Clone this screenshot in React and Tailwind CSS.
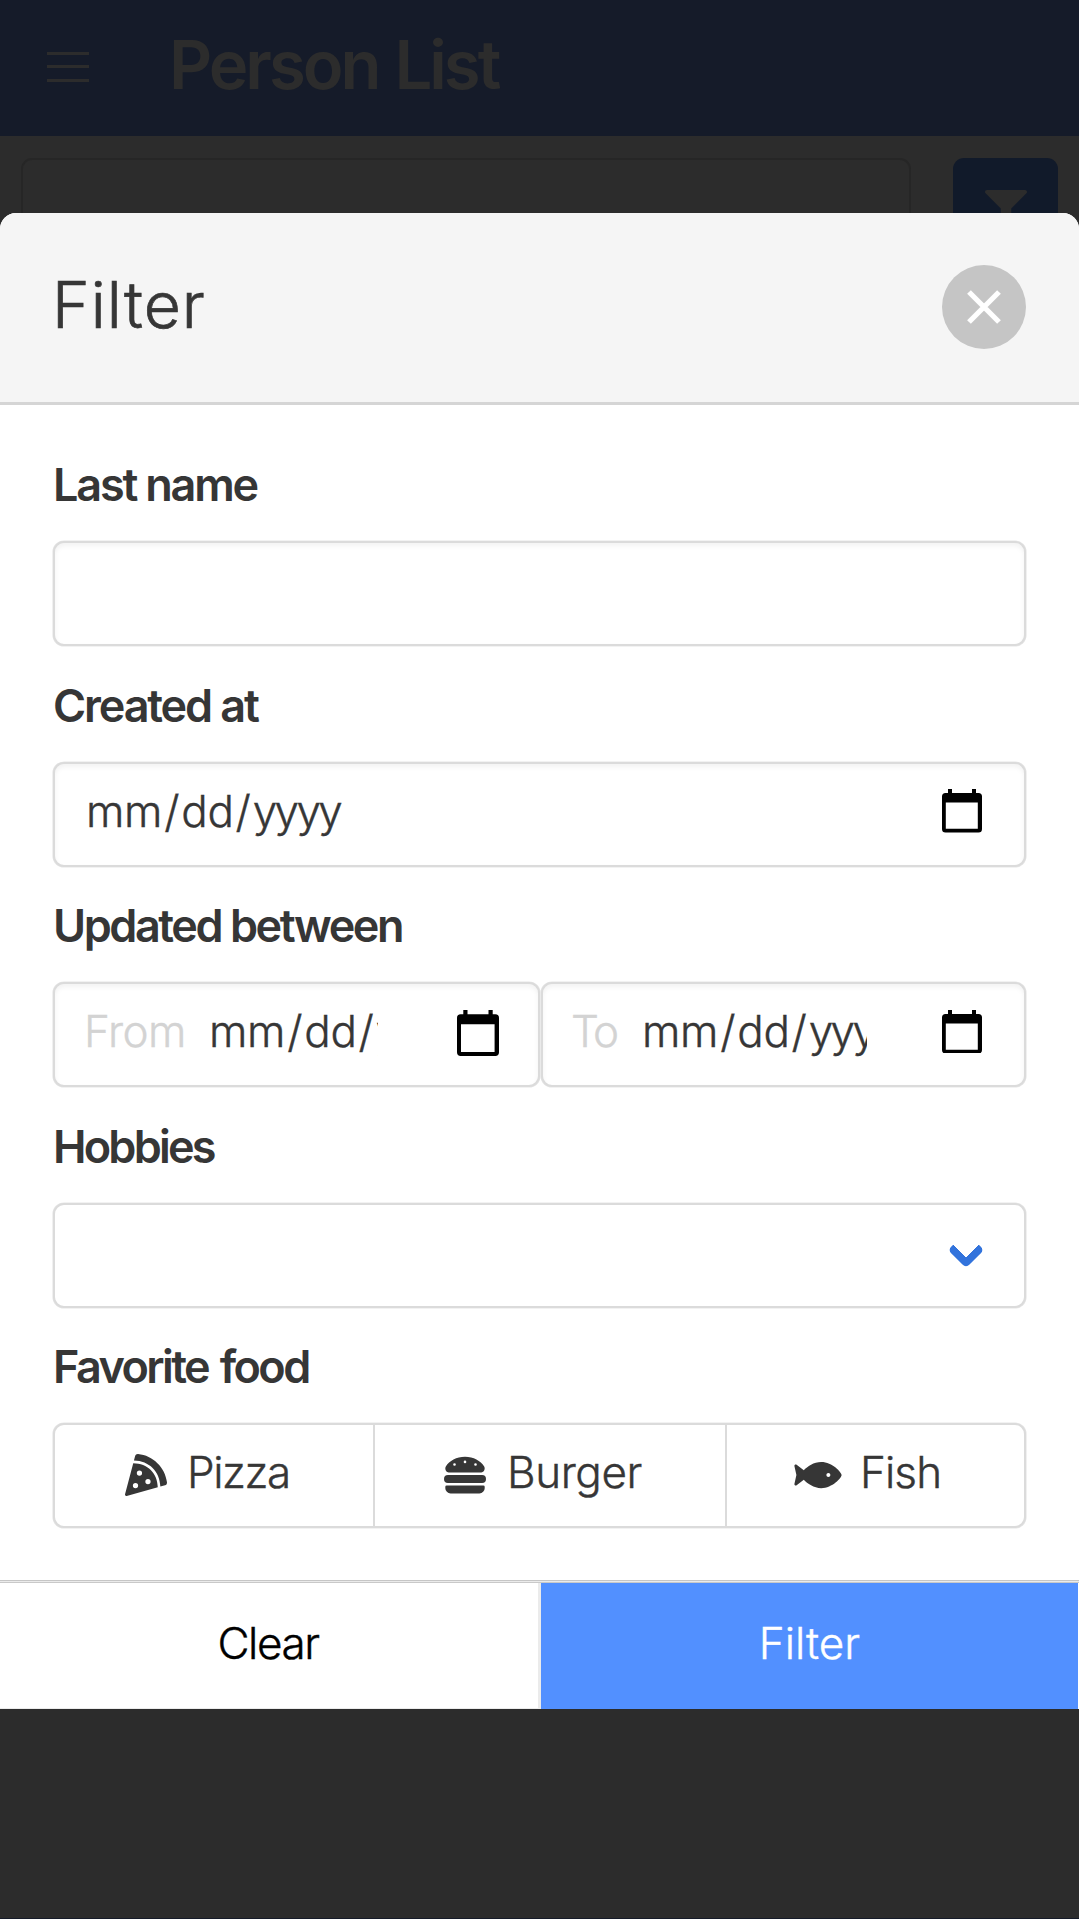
import React from "react";
import { FaFilter, FaPizzaSlice, FaHamburger, FaFish } from "react-icons/fa";

const box =
  "flex h-[105px] rounded-[11px] border-2 border-[#dbdbdb] bg-white";
const inset =
  "shadow-[0_0_0_0.6px_#e6e6e6,inset_0_3px_5px_rgba(10,10,10,0.05)]";
const text =
  "text-[44px] leading-[64px] font-light whitespace-nowrap [-webkit-text-stroke:0.4px_currentColor]";

function Calendar({ className }) {
  return (
    <svg viewBox="0 0 40 43.5" preserveAspectRatio="none" className={className}>
      <path
        fillRule="evenodd"
        d="M6 0h4v4h20V0h4v4h2.500a3.500 3.500 0 0 1 3.500 3.500V40a3.500 3.500 0 0 1-3.500 3.500h-33A3.500 3.500 0 0 1 0 40V7.500A3.500 3.500 0 0 1 3.500 4H6zM3.800 13.500v26.200h32V13.500z"
      />
    </svg>
  );
}

function DateText({ className = "" }) {
  return (
    <span className={text + " pb-[7px] tracking-[-0.300px] " + className}>
      mm<span className="mx-[2px]">/</span>dd<span className="mx-[2px]">/</span>
      <span className="tracking-[-2.600px]">yyyy</span>
    </span>
  );
}

function Field({ label, spacing, children }) {
  return (
    <div>
      <div
        className={
          "mb-[23px] h-[66px] text-[45px] leading-[66px] font-semibold whitespace-nowrap " +
          spacing
        }
      >
        {label}
      </div>
      {children}
    </div>
  );
}

function Page() {
  return (
    <div className="h-full">
      <header className="flex h-[136px] items-center bg-[#151b29] text-[#2c2c2c]">
        <div className="ml-[47px] flex w-[42px] flex-col gap-[10.500px] pb-[3px]">
          <span className="h-[3px] bg-[#2c2c2c]" />
          <span className="h-[3px] bg-[#2c2c2c]" />
          <span className="h-[3px] bg-[#2c2c2c]" />
        </div>
        <h1 className="ml-[80px] pb-[7px] text-[67px] leading-[80px] font-semibold tracking-[-3px] [word-spacing:2px] whitespace-nowrap">
          Person List
        </h1>
      </header>
      <div className="flex items-start pt-[22px] pr-[21px] pl-[21px]">
        <div className="h-[105px] flex-1 rounded-[11px] border-2 border-[#262626]" />
        <div className="ml-[42px] flex h-[105px] w-[105px] items-center justify-center rounded-[11px] bg-[#111a2a] text-[#2c2c2c]">
          <FaFilter size={42} />
        </div>
      </div>
    </div>
  );
}

export default function App() {
  return (
    <div className="relative h-[1919px] w-[1079px] overflow-hidden border-b border-[#151b29] bg-[#2c2c2c] font-['Inter',sans-serif] text-[#363636]">
      <Page />
      <div className="absolute top-[213px] left-0 w-full overflow-hidden rounded-t-[16px] bg-white">
        <div className="flex h-[192px] items-center justify-between border-b-[3px] border-[#d5d5d5] bg-[#f5f5f5] pr-[53px] pl-[52px]">
          <h2 className="pb-[5px] text-[64px] leading-[80px] font-light tracking-[1.1px] [-webkit-text-stroke:0.7px_currentColor]">
            Filter
          </h2>
          <button className="mb-px flex h-[84px] w-[84px] items-center justify-center rounded-full bg-[#c5c5c5]">
            <svg viewBox="0 0 34 34" className="h-[34px] w-[34px]">
              <path d="M2 2L32 32M32 2L2 32" stroke="#fff" strokeWidth="5.300" />
            </svg>
          </button>
        </div>

        <div className="flex flex-col gap-[26.500px] px-[53px] pt-[47px] pb-[52px]">
          <Field label="Last name" spacing="tracking-[-2.200px]">
            <div className={box + " " + inset} />
          </Field>

          <Field label="Created at" spacing="tracking-[-2.150px]">
            <div
              className={
                box + " items-center justify-between pr-[42px] pl-[31px] " + inset
              }
            >
              <DateText />
              <Calendar className="mb-[6px] h-[43.500px] w-[40px] fill-black" />
            </div>
          </Field>

          <Field label="Updated between" spacing="tracking-[-2.450px]">
            <div className="flex gap-px">
              <div className={box + " w-[487px] items-center pl-[29px] " + inset}>
                <span className={text + " w-[125px] pb-[7px] tracking-[-0.500px] text-[#d3d3d3]"}>
                  From
                </span>
                <DateText className="w-[169px] overflow-hidden" />
                <Calendar className="mb-[4px] ml-[79px] h-[46px] w-[42px] fill-black" />
              </div>
              <div className={box + " flex-1 items-center pl-[28px] " + inset}>
                <span className={text + " w-[71px] pb-[7px] tracking-[-2.500px] text-[#d3d3d3]"}>
                  To
                </span>
                <DateText className="w-[225px] overflow-hidden" />
                <Calendar className="mb-[6px] ml-[75px] h-[43.500px] w-[40px] fill-black" />
              </div>
            </div>
          </Field>

          <Field label="Hobbies" spacing="tracking-[-2.800px]">
            <div className={box + " items-center justify-end pr-[45px] shadow-[0_0_0_0.6px_#e6e6e6]"}>
              <span className="mb-[11px] h-[26px] w-[26px] -rotate-45 rounded-[5px] border-b-8 border-l-8 border-[#3273dc]" />
            </div>
          </Field>

          <Field label="Favorite food" spacing="tracking-[-2.600px] [word-spacing:3px]">
            <div className={box + " shadow-[0_0_0_0.6px_#e6e6e6]"}>
              <div className="flex w-[320px] items-center border-r-2 border-[#dbdbdb] pl-[70px]">
                <FaPizzaSlice size={42} className="mb-[2px]" />
                <span className={text + " ml-[20px] pb-[7px] tracking-[-1.400px]"}>Pizza</span>
              </div>
              <div className="flex w-[352px] items-center border-r-2 border-[#dbdbdb] pl-[69px]">
                <FaHamburger size={42} className="mb-[2px]" />
                <span className={text + " ml-[21px] pb-[7px] tracking-[-0.400px]"}>Burger</span>
              </div>
              <div className="flex flex-1 items-center pl-[67px]">
                <FaFish size={42} className="mb-[2px] w-[48px]" />
                <span className={text + " ml-[18px] pb-[7px] tracking-[-0.900px]"}>Fish</span>
              </div>
            </div>
          </Field>
        </div>

        <div className="border-t border-[#c6c6c6]">
          <div className="h-px bg-[#ebebeb]" />
          <div className="h-px bg-[#c9c9c9]" />
        </div>
        <div className="flex h-[126px]">
          <button className="flex w-[541px] items-center justify-center border-r-[3px] border-b border-[#ebebeb] bg-white pr-[2px] pb-[6px] text-black">
            <span className={text + " tracking-[-1.400px]"}>Clear</span>
          </button>
          <button className="mr-px flex flex-1 items-center justify-center bg-[#5290ff] pb-[7px] text-white">
            <span className={text}>Filter</span>
          </button>
        </div>
      </div>
    </div>
  );
}
